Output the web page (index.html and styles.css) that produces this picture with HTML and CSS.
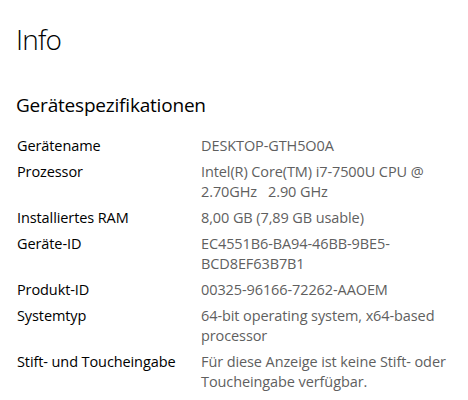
FILE: index.html
```html
<!DOCTYPE html>
<html lang="de">
<head>
<meta charset="utf-8">
<link rel="stylesheet" href="styles.css">
</head>
<body>
<main class="page">
  <h1 class="title">Info</h1>
  <h2 class="section">Gerätespezifikationen</h2>
  <dl class="specs">
    <dt>Gerätename</dt><dd>DESKTOP-GTH5O0A</dd>
    <dt>Prozessor</dt><dd>Intel(R) Core(TM) i7-7500U CPU @<br>2.70GHz&nbsp;&nbsp; 2.90 GHz</dd>
    <dt>Installiertes RAM</dt><dd>8,00 GB (7,89 GB usable)</dd>
    <dt>Geräte-ID</dt><dd>EC4551B6-BA94-46BB-9BE5-<br>BCD8EF63B7B1</dd>
    <dt>Produkt-ID</dt><dd>00325-96166-72262-AAOEM</dd>
    <dt>Systemtyp</dt><dd>64-bit operating system, x64-based<br>processor</dd>
    <dt>Stift- und Toucheingabe</dt><dd>Für diese Anzeige ist keine Stift- oder<br>Toucheingabe verfügbar.</dd>
  </dl>
</main>
</body>
</html>
```
FILE: styles.css
```css
html, body {
  margin: 0;
  padding: 0;
  background: #ffffff;
}
.page {
  padding: 20px 16px 0 16px;
  font-family: "Segoe UI", "Open Sans", "Noto Sans", sans-serif;
  color: #000000;
}
.title {
  margin: 0;
  font-size: 28px;
  font-weight: 300;
  line-height: 38px;
  letter-spacing: -0.8px;
}
.section {
  margin: 33px 0 0 0;
  font-size: 19px;
  font-weight: 400;
  line-height: 28px;
  letter-spacing: -0.2px;
}
.specs {
  margin: 17px 0 0 1px;
  display: grid;
  grid-template-columns: 184px 1fr;
  row-gap: 6px;
  font-size: 14.5px;
  line-height: 20px;
  letter-spacing: -0.1px;
}
.specs dt {
  margin: 0;
  color: #000000;
}
.specs dd {
  margin: 0;
  color: #5f5f5f;
  white-space: nowrap;
}
```
